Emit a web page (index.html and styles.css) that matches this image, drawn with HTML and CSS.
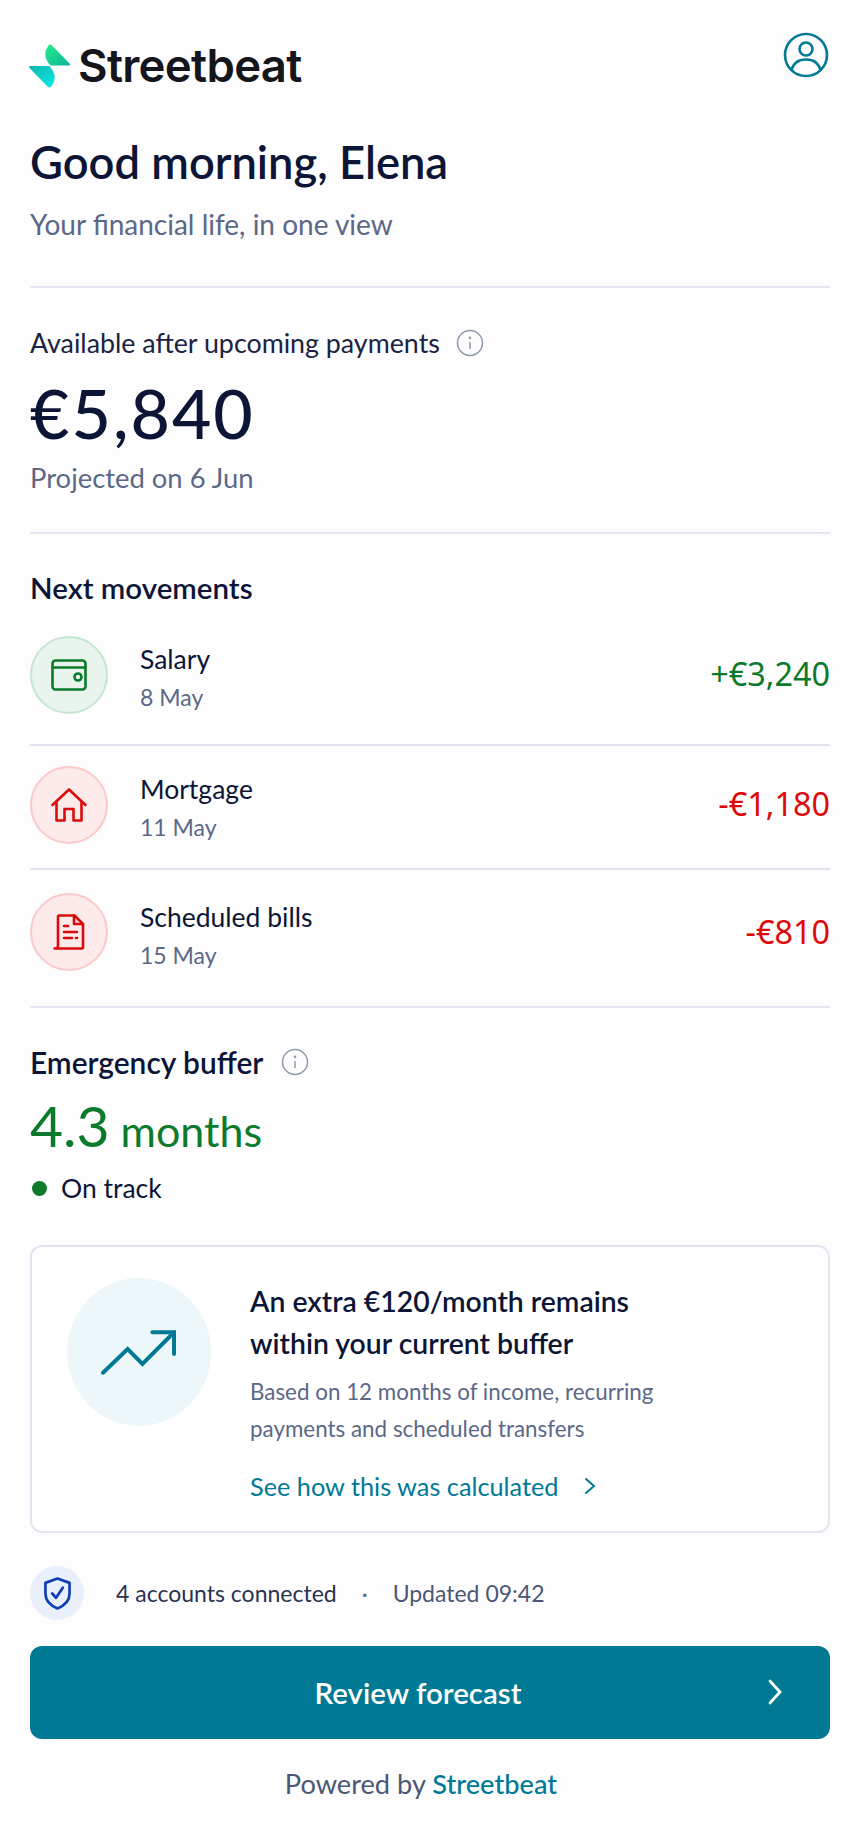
FILE: index.html
```html
<!DOCTYPE html>
<html lang="en">
  <head>
    <meta charset="UTF-8" />
    <meta name="viewport" content="width=device-width, initial-scale=1.0" />
    <title>Streetbeat</title>
    <link rel="stylesheet" href="styles.css">
  </head>
  <body>
    <div class="page">
      <header class="topBar">
        <div class="brand">
          <svg class="brandMark" viewBox="0 0 42 44">
            <defs>
              <linearGradient id="markTop" x1="0" y1="0" x2="1" y2="1">
                <stop offset="0" stop-color="#25ee8c" />
                <stop offset="1" stop-color="#0bb39a" />
              </linearGradient>
              <linearGradient id="markBottom" x1="0" y1="0" x2="1" y2="1">
                <stop offset="0" stop-color="#0cb8ae" />
                <stop offset="1" stop-color="#0ce8e4" />
              </linearGradient>
            </defs>
            <path fill="url(#markTop)" d="M19.500 1.500 Q21 -0.500 23 1.500 L40.500 19.500 Q42 21.500 40 21.500 L21.500 21.500 Q12 11 19.500 1.500 Z" />
            <path fill="url(#markBottom)" d="M1 22 L20.500 22 Q30 33 22 42.500 Q20.500 44.500 18.500 42.500 L0.500 24 Q-0.500 22 1 22 Z" />
          </svg>
          <span class="brandName">Streetbeat</span>
        </div>
        <svg class="avatar" viewBox="0 0 46 46" fill="none" stroke="#007a94" stroke-width="2.600">
          <circle cx="23" cy="23" r="21" />
          <circle cx="23" cy="17" r="6.500" />
          <path d="M8.500 38 C10.500 31 16 27.500 23 27.500 C30 27.500 35.500 31 37.500 38" />
        </svg>
      </header>

      <section class="intro">
        <h1>Good morning, Elena</h1>
        <p class="subtitle">Your financial life, in one view</p>
      </section>

      <section class="available">
        <div class="labelRow">
          <span class="availableLabel">Available after upcoming payments</span>
          <svg class="info" viewBox="0 0 28 28" fill="none" stroke="#8d99ae" stroke-width="1.500">
            <circle cx="14" cy="14" r="12.500" />
            <path d="M14 13 V20" />
            <circle cx="14" cy="8.800" r="0.600" />
          </svg>
        </div>
        <div class="balance">€5,840</div>
        <div class="projected">Projected on 6 Jun</div>
      </section>

      <section class="movements">
        <h2>Next movements</h2>
        <div class="moveRow moveFirst">
          <div class="moveIcon green">
            <svg viewBox="0 0 36 32" fill="none" stroke="#0b7a2a" stroke-width="2.600" stroke-linejoin="round">
              <rect x="1.500" y="1.500" width="33" height="29" rx="3" />
              <path d="M1.500 8.500 H34.500" />
              <circle cx="27" cy="18" r="3.500" />
            </svg>
          </div>
          <div class="moveText">
            <div class="moveName">Salary</div>
            <div class="moveDate">8 May</div>
          </div>
          <div class="moveAmount plus">+€3,240</div>
        </div>
        <div class="moveRow moveMid">
          <div class="moveIcon red">
            <svg viewBox="0 0 36 34" fill="none" stroke="#dc0a0a" stroke-width="2.600" stroke-linecap="round" stroke-linejoin="round">
              <path d="M1.500 17 L18 1.500 L34.500 17" />
              <path d="M5.500 14 V32.500 H13.500 V21 H22.500 V32.500 H30.500 V14" />
            </svg>
          </div>
          <div class="moveText">
            <div class="moveName">Mortgage</div>
            <div class="moveDate">11 May</div>
          </div>
          <div class="moveAmount minus">-€1,180</div>
        </div>
        <div class="moveRow moveLast">
          <div class="moveIcon red">
            <svg viewBox="0 0 32 36" fill="none" stroke="#dc0a0a" stroke-width="2.600" stroke-linecap="round" stroke-linejoin="round">
              <path d="M1.500 34.500 H29 Q30 34.500 30 33 V10 L21.500 1.500 H6 Q5 1.500 5 3 V32 Q5 34.500 1.500 34.500" />
              <path d="M21 1.500 V10 H30" />
              <path d="M11 12 H15 M11 18 H24 M11 24 H19 M23 24 H24" />
            </svg>
          </div>
          <div class="moveText">
            <div class="moveName">Scheduled bills</div>
            <div class="moveDate">15 May</div>
          </div>
          <div class="moveAmount minus">-€810</div>
        </div>
      </section>

      <section class="buffer">
        <div class="labelRow bufferLabel">
          <h2>Emergency buffer</h2>
          <svg class="info" viewBox="0 0 28 28" fill="none" stroke="#8d99ae" stroke-width="1.500">
            <circle cx="14" cy="14" r="12.500" />
            <path d="M14 13 V20" />
            <circle cx="14" cy="8.800" r="0.600" />
          </svg>
        </div>
        <div class="bufferValue"><span class="bufferNum">4.3</span> months</div>
        <div class="onTrack"><span class="dot"></span>On track</div>
      </section>

      <section class="card">
        <div class="cardCircle">
          <svg viewBox="0 0 76 46" fill="none" stroke="#007a94" stroke-width="4" stroke-linecap="round">
            <path d="M2 44 L27 20 L42 35 L74 3" />
            <path d="M52 3 H74 V25" />
          </svg>
        </div>
        <div class="cardBody">
          <h3>An extra €120/month remains<br />within your current buffer</h3>
          <p>Based on 12 months of income, recurring<br />payments and scheduled transfers</p>
          <div class="cardLink">
            <span>See how this was calculated</span>
            <svg viewBox="0 0 12 18" fill="none" stroke="#007a94" stroke-width="2" stroke-linecap="round">
              <path d="M2 2 L10 9 L2 16" />
            </svg>
          </div>
        </div>
      </section>

      <section class="status">
        <div class="shield">
          <svg viewBox="0 0 28 34" fill="none" stroke="#0f3fb0" stroke-width="2.800" stroke-linejoin="round" stroke-linecap="round">
            <path d="M14 1.500 L26.500 6 V17 C26.500 25 20 30 14 32.500 C8 30 1.500 25 1.500 17 V6 Z" />
            <path d="M8.500 17 L12.500 21.500 L19.500 11" />
          </svg>
        </div>
        <span class="accounts">4 accounts connected</span>
        <span class="sep">·</span>
        <span class="updated">Updated 09:42</span>
      </section>

      <button class="cta">
        <span>Review forecast</span>
        <svg viewBox="0 0 14 26" fill="none" stroke="#ffffff" stroke-width="2.800" stroke-linecap="round">
          <path d="M2 2 L12 13 L2 24" />
        </svg>
      </button>

      <footer class="poweredBy">Powered by <span class="poweredName">Streetbeat</span></footer>
    </div>
  </body>
</html>
```

FILE: styles.css
```css
* {
  box-sizing: border-box;
}

body {
  margin: 0;
  background: #fdfdfe;
  font-family: "Lato", "Liberation Sans", sans-serif;
  color: #0c1536;
}

h1,
h2,
h3,
p {
  margin: 0;
  font-weight: normal;
}

.page {
  width: 862px;
  height: 1824px;
  padding: 0 32px 0 30px;
  overflow: hidden;
}

.topBar {
  display: flex;
  justify-content: space-between;
  align-items: flex-start;
  height: 135px;
  padding-top: 32px;
}

.brand {
  display: flex;
  align-items: center;
  gap: 7px;
  margin-top: 11px;
  margin-left: -1px;
}

.brandMark {
  width: 42px;
  height: 44px;
}

.brandName {
  font-family: "Inter", sans-serif;
  font-weight: 600;
  font-size: 45.500px;
  line-height: 46px;
  letter-spacing: -0.7px;
  color: #14161c;
}

.avatar {
  width: 46px;
  height: 46px;
  margin-right: 1px;
}

.intro {
  height: 153px;
  border-bottom: 2px solid #e3e7f1;
}

h1 {
  font-size: 45.300px;
  line-height: 54px;
  font-weight: 600;
}

.subtitle {
  margin-top: 18px;
  font-size: 28px;
  line-height: 34px;
  color: #5b6887;
}

.available {
  height: 246px;
  padding-top: 38px;
  border-bottom: 2px solid #e3e7f1;
}

.labelRow {
  display: flex;
  align-items: center;
  gap: 16px;
}

.availableLabel {
  font-size: 26.800px;
  line-height: 34px;
  color: #1a2340;
}

.info {
  width: 28px;
  height: 28px;
}

.balance {
  margin-top: 17px;
  font-size: 68px;
  line-height: 72px;
  letter-spacing: 2px;
  font-weight: 500;
}

.projected {
  margin-top: 13px;
  font-size: 27.400px;
  line-height: 32px;
  color: #5b6887;
}

h2 {
  font-size: 29.500px;
  line-height: 34px;
  font-weight: 600;
}

.movements {
  padding-top: 37px;
  height: 474px;
  border-bottom: 2px solid #e3e7f1;
}

.moveRow {
  display: flex;
  align-items: center;
  height: 124px;
  border-bottom: 2px solid #dfe3ee;
}

.moveFirst {
  height: 141px;
}

.moveMid {
  padding-bottom: 5px;
}

.moveLast {
  height: 136px;
  padding-bottom: 12px;
  border-bottom: none;
}

.moveIcon {
  display: flex;
  align-items: center;
  justify-content: center;
  width: 78px;
  height: 78px;
  border-radius: 50%;
  border: 2px solid;
}

.green {
  background: #e9f5ec;
  border-color: #c4e6d0;
}

.green svg {
  width: 36px;
  height: 32px;
}

.red {
  background: #fdeaea;
  border-color: #fcc9c9;
}

.red svg {
  width: 36px;
  height: 36px;
}

.moveText {
  flex: 1;
  margin: 5px 0 0 32px;
}

.moveName {
  font-size: 26.500px;
  line-height: 34px;
}

.moveDate {
  margin-top: 6px;
  font-size: 23px;
  line-height: 30px;
  color: #5b6887;
}

.moveAmount {
  margin-bottom: 3px;
  font-family: "Noto Sans", sans-serif;
  font-size: 32.400px;
  line-height: 40px;
}

.plus {
  color: #0b7a2a;
}

.minus {
  color: #dc0a0a;
}

.buffer {
  height: 237px;
  padding-top: 37px;
}

.bufferLabel {
  gap: 18px;
}

.bufferLabel h2 {
  font-size: 29.900px;
}

.bufferValue {
  margin-top: 14px;
  font-size: 43px;
  line-height: 64px;
  color: #0b7a2a;
}

.bufferNum {
  font-size: 57px;
}

.onTrack {
  display: flex;
  align-items: center;
  gap: 14px;
  margin-top: 8px;
  font-size: 26.500px;
  line-height: 34px;
}

.dot {
  width: 15px;
  height: 15px;
  margin-left: 2px;
  border-radius: 50%;
  background: #0b7a2a;
}

.card {
  display: flex;
  align-items: flex-start;
  height: 288px;
  padding: 31px 0 0 35px;
  background: #ffffff;
  border: 2px solid #e0e5f0;
  border-radius: 12px;
}

.cardCircle {
  display: flex;
  align-items: center;
  justify-content: center;
  width: 144px;
  height: 148px;
  border-radius: 50%;
  background: #edf6f8;
}

.cardCircle svg {
  width: 75px;
  height: 46px;
  margin-left: -2px;
}

.cardBody {
  margin-left: 39px;
}

h3 {
  font-size: 28.400px;
  line-height: 42px;
  font-weight: 600;
  margin-top: 2px;
}

.cardBody p {
  margin-top: 9px;
  font-size: 22.400px;
  line-height: 37px;
  color: #5b6887;
}

.cardLink {
  display: flex;
  align-items: center;
  gap: 25px;
  margin-top: 22px;
  font-size: 25.300px;
  line-height: 34px;
  color: #007a94;
}

.cardLink svg {
  width: 12px;
  height: 18px;
}

.status {
  display: flex;
  align-items: center;
  height: 54px;
  margin-top: 33px;
  font-size: 23px;
  color: #2a3350;
}

.shield {
  display: flex;
  align-items: center;
  justify-content: center;
  width: 54px;
  height: 54px;
  border-radius: 50%;
  background: #e9f0fb;
}

.shield svg {
  width: 27px;
  height: 33px;
}

.accounts {
  margin-left: 32px;
}

.sep {
  margin: 0 25px;
  color: #5b6887;
}

.updated {
  color: #4b5775;
}

.cta {
  display: flex;
  align-items: center;
  justify-content: center;
  position: relative;
  width: 800px;
  height: 93px;
  margin-top: 26px;
  padding: 0 24px 0 0;
  border: none;
  border-radius: 12px;
  background: #007a94;
  color: #ffffff;
  font-family: inherit;
  font-size: 29.500px;
  font-weight: 600;
  cursor: pointer;
}

.cta svg {
  position: absolute;
  right: 48px;
  top: 33px;
  width: 14px;
  height: 26px;
}

.poweredBy {
  margin-top: 28px;
  padding-right: 18px;
  text-align: center;
  font-size: 27.200px;
  line-height: 34px;
  color: #4b5775;
}

.poweredName {
  color: #007a94;
  font-weight: 500;
}
```
